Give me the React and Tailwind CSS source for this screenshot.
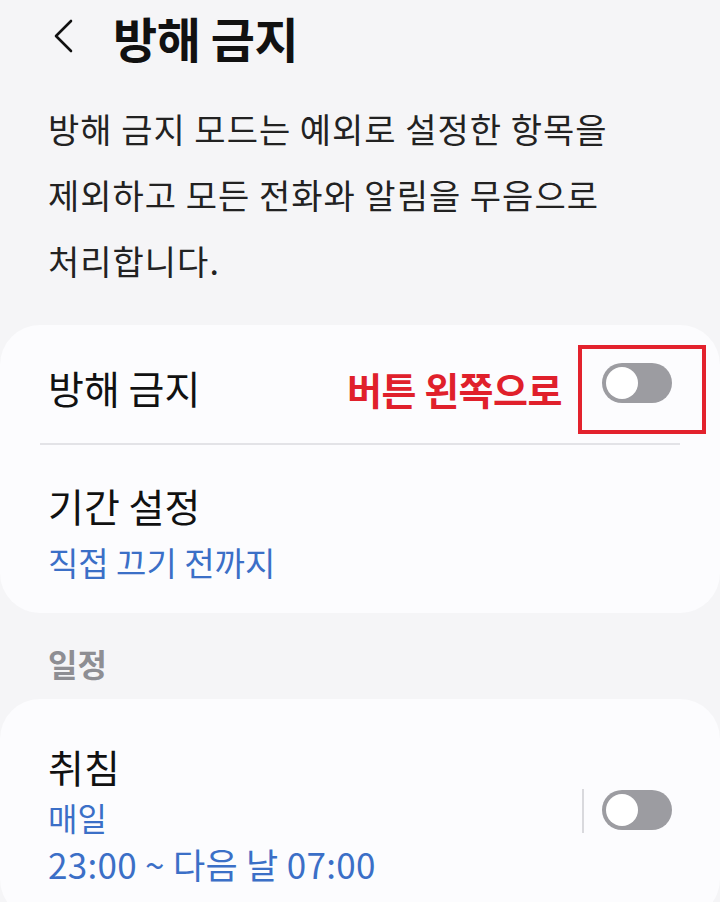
import React from "react";

function Toggle({ className = "" }) {
  return (
    <div className={"w-[70px] h-[40px] rounded-full bg-[#9c9ca1] relative shrink-0 " + className}>
      <div className="absolute left-[4px] top-[4px] w-[32px] h-[32px] rounded-full bg-white" />
    </div>
  );
}

export default function App() {
  return (
    <div
      className="w-[720px] h-[902px] bg-[#f5f5f7] overflow-hidden text-[#111]"
      style={{ fontFamily: '"Noto Sans CJK KR", "Noto Sans", sans-serif' }}
    >
      {/* Header */}
      <div className="flex items-center h-[76px] pl-[50px]">
        <svg width="26" height="40" viewBox="0 0 26 40" className="mt-[-2px]">
          <path d="M21 4 L6 19 L21 34" fill="none" stroke="#111" strokeWidth="2.6" strokeLinecap="round" strokeLinejoin="round" />
        </svg>
        <h1 className="ml-[37px] text-[48px] font-bold leading-none tracking-[-0.5px] mt-[-2px]">방해 금지</h1>
      </div>

      {/* Description */}
      <p className="pl-[48px] pt-[20px] text-[34px] leading-[66px] text-[#222] whitespace-nowrap tracking-[1px]">
        방해 금지 모드는 예외로 설정한 항목을
        <br />
        제외하고 모든 전화와 알림을 무음으로
        <br />
        처리합니다.
      </p>

      {/* Card 1 */}
      <div className="mt-[31px] bg-[#fcfcfe] rounded-[40px]">
        <div className="flex items-center h-[118px] pl-[48px] pr-[14px]">
          <span className="text-[39px] flex-1 mt-[7px]">방해 금지</span>
          <span className="text-[38px] font-bold text-[#e0202b] mr-[16px] tracking-[-0.5px] mt-[8px]">버튼 왼쪽으로</span>
          <div className="w-[128px] h-[89px] border-[4px] border-[#e3222d] flex items-start pt-[14px] pl-[20px] mt-[11px]">
            <Toggle />
          </div>
        </div>
        <div className="mx-[40px] h-[2px] bg-[#e3e3e7]" />
        <div className="pl-[48px] pt-[35px] pb-[28px]">
          <div className="text-[39px] leading-[50px]">기간 설정</div>
          <div className="text-[33px] leading-[46px] text-[#3b6fc7] mt-[9px]">직접 끄기 전까지</div>
        </div>
      </div>

      {/* Section label */}
      <div className="pl-[48px] pt-[32px] pb-[18px] text-[32px] font-semibold text-[#8e8e93] leading-[36px]">일정</div>

      {/* Card 2 */}
      <div className="bg-[#fcfcfe] rounded-[40px] pt-[42px] pb-[30px] pl-[48px] pr-[48px] flex items-center">
        <div className="flex-1">
          <div className="text-[39px] leading-[50px]">취침</div>
          <div className="text-[32px] leading-[50px] text-[#3b6fc7] mt-[1px]">매일</div>
          <div className="text-[35px] leading-[50px] text-[#3b6fc7] mt-[-3px] tracking-[0.3px]">23:00 ~ 다음 날 07:00</div>
        </div>
        <div className="w-[2px] h-[44px] bg-[#d9d9dd] mr-[18px] mt-[-8px]" />
        <Toggle className="mt-[-10px]" />
      </div>
    </div>
  );
}
